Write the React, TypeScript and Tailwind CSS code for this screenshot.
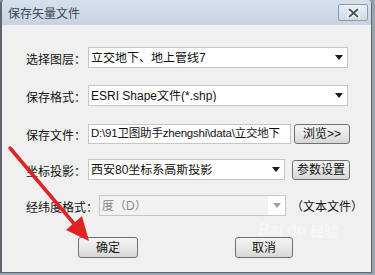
import React from 'react'

const cjk = { fontFamily: '"Noto Sans CJK SC", "Liberation Sans", sans-serif' }
const mixed = { fontFamily: '"Liberation Sans", "Noto Sans CJK SC", sans-serif' }

// 下拉箭头
function Caret({ gray }: { gray?: boolean }) {
  return (
    <svg width="8" height="5" viewBox="0 0 8 5">
      <path d="M0 0 L8 0 L4 5 Z" fill={gray ? '#a0a0a0' : '#1a1a1a'} />
    </svg>
  )
}

function Combo({ text, width, disabled }: { text: string; width: string; disabled?: boolean }) {
  return (
    <div
      className={`${width} h-[21px] flex items-center border border-[#c5c7cc] ${disabled ? 'bg-[#f2f2f2]' : 'bg-white'}`}
    >
      <span
        className={`flex-1 pl-[2px] text-[12px] leading-none whitespace-nowrap overflow-hidden ${disabled ? 'text-[#8a8a8a]' : 'text-[#111]'}`}
        style={mixed}
      >
        {text}
      </span>
      <div className={`w-[17px] h-full flex items-center justify-center ${disabled ? 'bg-white' : ''}`}>
        <Caret gray={disabled} />
      </div>
    </div>
  )
}

function Btn({ label, width, height }: { label: string; width: string; height: string }) {
  return (
    <div
      className={`${width} ${height} flex items-center justify-center rounded-[3px] border border-[#707070] bg-gradient-to-b from-[#f4f4f4] via-[#e8e8e8] to-[#d6d6d6] text-[12px] text-[#111] leading-none`}
      style={mixed}
    >
      {label}
    </div>
  )
}

function Label({ text }: { text: string }) {
  return (
    <span className="text-[12px] text-[#111] leading-none whitespace-nowrap" style={cjk}>
      {text}
    </span>
  )
}

export default function App() {
  return (
    <div className="relative w-[375px] h-[275px] overflow-hidden bg-[#9aa3ad]">
      <div className="w-[372px] h-[273px] border-l-2 border-r border-b border-[#5d6670] bg-[#f0f0f0] flex flex-col rounded-tl-[4px] rounded-tr-[4px]">
        {/* 标题栏 */}
        <div className="h-[25px] shrink-0 flex items-center justify-between pl-[6px] pr-[3px] bg-gradient-to-b from-[#d6e1ec] to-[#c6d4e3] rounded-tl-[4px] rounded-tr-[4px]">
          <span className="text-[12px] text-[#3c4650] leading-none" style={cjk}>保存矢量文件</span>
          <div className="w-[30px] h-[17px] flex items-center justify-center border border-[#8b9aab] rounded-[2px] bg-gradient-to-b from-[#e9eff5] to-[#cfdbe7]">
            <svg width="13" height="10" viewBox="0 0 13 10">
              <path d="M2 1 L11 9 M11 1 L2 9" stroke="#ffffff" strokeWidth="4" strokeLinecap="square" />
              <path d="M2 1 L11 9 M11 1 L2 9" stroke="#4b5560" strokeWidth="2" />
            </svg>
          </div>
        </div>

        {/* 表单内容 */}
        <div className="flex flex-col pl-[24px] pt-[22px]">
          <div className="flex items-center h-[21px]">
            <div className="w-[62px]"><Label text="选择图层：" /></div>
            <Combo text="立交地下、地上管线7" width="w-[260px]" />
          </div>

          <div className="flex items-center h-[21px] mt-[17px]">
            <div className="w-[62px]"><Label text="保存格式：" /></div>
            <Combo text="ESRI Shape文件(*.shp)" width="w-[260px]" />
          </div>

          <div className="flex items-center h-[21px] mt-[17px]">
            <div className="w-[62px]"><Label text="保存文件：" /></div>
            <div className="w-[203px] h-[20px] flex items-center border border-[#c5c7cc] bg-white overflow-hidden">
              <span className="pl-[2px] text-[11.5px] tracking-[-0.2px] text-[#111] leading-none whitespace-nowrap" style={mixed}>
                D:\91卫图助手zhengshi\data\立交地下
              </span>
            </div>
            <div className="ml-[3px]">
              <Btn label="浏览>>" width="w-[56px]" height="h-[20px]" />
            </div>
          </div>

          <div className="flex items-center h-[21px] mt-[15px]">
            <div className="w-[62px]"><Label text="坐标投影：" /></div>
            <Combo text="西安80坐标系高斯投影" width="w-[197px]" />
            <div className="ml-[7px]">
              <Btn label="参数设置" width="w-[58px]" height="h-[20px]" />
            </div>
          </div>

          <div className="flex items-center h-[21px] mt-[15px]">
            <div className="w-[73px]"><Label text="经纬度格式：" /></div>
            <Combo text="度（D）" width="w-[187px]" disabled />
            <span className="ml-[5px] text-[12px] text-[#111] leading-none whitespace-nowrap" style={cjk}>（文本文件）</span>
          </div>

          <div className="flex items-center mt-[21px] pl-[52px]">
            <Btn label="确定" width="w-[60px]" height="h-[21px]" />
            <div className="ml-[97px]">
              <Btn label="取消" width="w-[58px]" height="h-[21px]" />
            </div>
          </div>
        </div>
      </div>

      {/* 百度经验水印 */}
      <div className="absolute left-[258px] top-[222px] flex items-center gap-[4px] pointer-events-none opacity-40">
        <span className="text-[16px] font-bold italic text-white leading-none" style={mixed}>Bai</span>
        <span className="text-[16px] font-bold text-white leading-none" style={mixed}>du</span>
        <span className="text-[14px] font-bold text-white leading-none" style={cjk}>经验</span>
      </div>

      {/* 红色箭头 */}
      <svg className="absolute left-0 top-0 pointer-events-none" width="375" height="275" viewBox="0 0 375 275">
        <path d="M10 148 L76 226" stroke="#e02424" strokeWidth="3.5" strokeLinecap="round" />
        <path d="M89 241 L66 230 L82 216 Z" fill="#e02424" />
      </svg>
    </div>
  )
}
